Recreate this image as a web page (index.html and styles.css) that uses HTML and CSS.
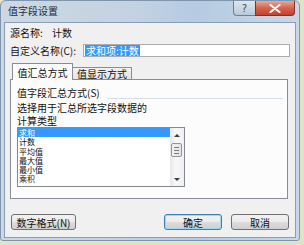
FILE: index.html
```html
<!DOCTYPE html>
<html lang="zh-CN">

<head>
    <meta charset="UTF-8">
    <meta name="viewport" content="width=device-width, initial-scale=1.0">
    <title>值字段设置</title>
    <link rel="stylesheet" href="styles.css">
</head>

<body>
    <div class="window">
        <div class="titlebar">
            <span class="title">值字段设置</span>
            <div class="caption-buttons">
                <span class="cap-btn help">?</span>
                <span class="cap-btn close">
                    <svg width="12" height="9" viewBox="0 0 12 9">
                        <path d="M1.5 1 L10.5 8 M10.5 1 L1.5 8" stroke="#fff" stroke-width="2.2" stroke-linecap="round" />
                    </svg>
                </span>
            </div>
        </div>

        <div class="client">
            <div class="row source">
                <span class="source-label">源名称:</span>
                <span>计数</span>
            </div>
            <div class="row custom-name">
                <label class="name-label" for="customName">自定义名称(C):</label>
                <div class="text-box" id="customName"><span class="selected-text">求和项:计数</span></div>
            </div>

            <div class="tabs">
                <div class="tab active">值汇总方式</div>
                <div class="tab">值显示方式</div>
            </div>
            <div class="tab-panel">
                <div class="group-head">
                    <span>值字段汇总方式(S)</span>
                    <span class="group-line"></span>
                </div>
                <p class="hint">选择用于汇总所选字段数据的<br>计算类型</p>
                <div class="listbox">
                    <ul class="list-items">
                        <li class="selected">求和</li>
                        <li>计数</li>
                        <li>平均值</li>
                        <li>最大值</li>
                        <li>最小值</li>
                        <li>乘积</li>
                    </ul>
                    <div class="scrollbar">
                        <span class="arrow up"></span>
                        <div class="track">
                            <div class="thumb"><i></i><i></i><i></i></div>
                        </div>
                        <span class="arrow down"></span>
                    </div>
                </div>
            </div>

            <div class="buttons">
                <button type="button" class="btn">数字格式(N)</button>
                <button type="button" class="btn default ok">确定</button>
                <button type="button" class="btn">取消</button>
            </div>
        </div>
    </div>
</body>

</html>
```

FILE: styles.css
```css
* {
    box-sizing: border-box;
}

body {
    margin: 0;
    background-color: #dfe4c6;
    font-family: "Noto Sans CJK SC", "Noto Sans", sans-serif;
    font-size: 10px;
    color: #111;
}

.window {
    width: 300px;
    height: 241px;
    padding: 0 4px 3px 3px;
    border: 1px solid #7f95ad;
    border-radius: 6px 6px 3px 3px;
    background: linear-gradient(90deg, #cdd8e3 0%, #c3d2e2 45%, #b5cbe2 65%, #c9d7e6 100%);
}

/* title bar */
.titlebar {
    display: flex;
    height: 21px;
}

.title {
    padding: 4px 0 0 4px;
    font-size: 10px;
    line-height: 12px;
    color: #1d2b3c;
}

.caption-buttons {
    display: flex;
    margin-left: auto;
    height: 15px;
}

.cap-btn {
    display: flex;
    align-items: center;
    justify-content: center;
    height: 15px;
    border: 1px solid #6d7f93;
    border-top: none;
}

.help {
    width: 22px;
    border-right: none;
    border-radius: 0 0 0 4px;
    background: linear-gradient(#dfe7ef, #b9c8d8);
    color: #3f4f62;
    font-size: 10px;
    font-family: "DejaVu Sans", sans-serif;
}

.close {
    width: 40px;
    border-color: #7e3124;
    border-radius: 0 0 4px 0;
    background: linear-gradient(#e9a999 0%, #d5634d 50%, #c2412b 100%);
}

/* client area */
.client {
    width: 292px;
    height: 216px;
    padding: 4px 5px 0 5px;
    border: 1px solid #8b9db2;
    background-color: #f0f0f0;
}

.row {
    display: flex;
    align-items: center;
}

.source {
    height: 12px;
    line-height: 12px;
}

.source-label {
    width: 42px;
}

.custom-name {
    margin-top: 5px;
    height: 13px;
}

.name-label {
    width: 73px;
}

.text-box {
    flex: 1;
    height: 13px;
    padding-left: 1px;
    border: 1px solid #abadb3;
    background-color: #fff;
    line-height: 11px;
}

.selected-text {
    display: inline-block;
    background-color: #3399ff;
    color: #fff;
    padding: 0 1px;
}

/* tabs */
.tabs {
    display: flex;
    align-items: flex-end;
    height: 16px;
    margin-top: 6px;
    padding-left: 2px;
}

.tab {
    height: 12px;
    width: 59px;
    border: 1px solid #898c95;
    border-bottom: none;
    border-left: none;
    background: linear-gradient(#f2f2f2, #e3e3e3);
    text-align: center;
    line-height: 12px;
}

.tab.active {
    position: relative;
    z-index: 1;
    width: 61px;
    height: 17px;
    margin-bottom: -1px;
    border-left: 1px solid #898c95;
    background-color: #fcfcfc;
    background-image: none;
    line-height: 18px;
}

.tab-panel {
    width: 278px;
    height: 120px;
    padding: 7px 4px 0 6px;
    border: 1px solid #898c95;
    background-color: #fcfcfc;
}

.group-head {
    display: flex;
    align-items: flex-end;
    height: 12px;
    line-height: 12px;
}

.group-line {
    flex: 1;
    margin: 0 0 0 8px;
    border-top: 1px solid #d5dfe5;
}

.hint {
    margin: 3px 0 0 0;
    line-height: 12.5px;
}

/* list box */
.listbox {
    display: flex;
    width: 168px;
    height: 60px;
    border: 1px solid #828790;
    background-color: #fff;
}

.list-items {
    flex: 1;
    margin: 0;
    padding: 0;
    list-style: none;
    font-size: 8px;
    line-height: 9.3px;
}

.list-items li {
    height: 9.3px;
    padding-left: 1px;
}

.list-items .selected {
    background-color: #3399ff;
    color: #fff;
}

.scrollbar {
    display: flex;
    flex-direction: column;
    width: 14px;
    background: linear-gradient(90deg, #e8e8e8, #f7f7f7 40%, #f0f0f0);
}

.arrow {
    display: flex;
    align-items: center;
    justify-content: center;
    height: 14px;
}

.arrow::after {
    content: "";
    border-left: 3px solid transparent;
    border-right: 3px solid transparent;
}

.arrow.up::after {
    border-bottom: 3px solid #3d3d3d;
}

.arrow.down::after {
    border-top: 3px solid #3d3d3d;
}

.track {
    flex: 1;
    padding-top: 1px;
}

.thumb {
    display: flex;
    flex-direction: column;
    align-items: center;
    justify-content: center;
    gap: 2px;
    width: 11px;
    height: 14px;
    margin-left: 1px;
    border: 1px solid #959595;
    border-radius: 2px;
    background: linear-gradient(90deg, #f3f3f3, #e2e2e2);
}

.thumb i {
    display: block;
    width: 5px;
    border-top: 1px solid #7c7c7c;
}

/* bottom buttons */
.buttons {
    display: flex;
    margin-top: 15px;
    padding-left: 1px;
    padding-right: 1px;
}

.btn {
    height: 16px;
    width: 58px;
    padding: 0;
    border: 1px solid #707070;
    border-radius: 3px;
    background: linear-gradient(#f2f2f2 0%, #ebebeb 50%, #dddddd 51%, #cfcfcf 100%);
    font-family: inherit;
    font-size: 10px;
    line-height: 13px;
    color: #111;
}

.btn:first-child {
    width: 65px;
}

.ok {
    margin-left: auto;
    margin-right: 9px;
}

.btn.default {
    border-color: #3c7fb1;
    box-shadow: inset 0 0 0 1px #9ed8f5;
}
```
